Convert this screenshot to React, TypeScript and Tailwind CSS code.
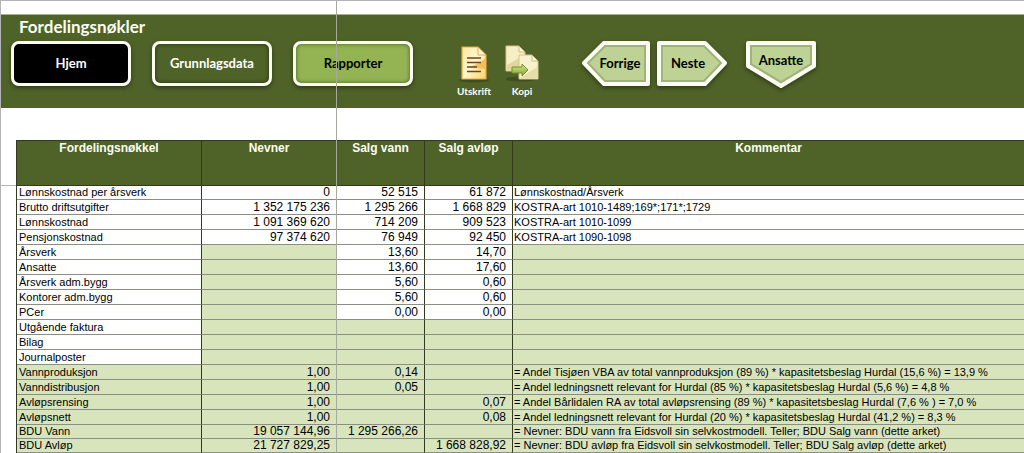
import React from 'react';
import clsx from 'clsx';

interface KeyRow {
  name: string;
  nevner?: string;
  vann?: string;
  avlop?: string;
  comment?: string;
  kind: 'cost' | 'staff' | 'empty' | 'share';
  compact?: boolean;
}

const rows: KeyRow[] = [
  { name: 'Lønnskostnad per årsverk', nevner: '0', vann: '52 515', avlop: '61 872', comment: 'Lønnskostnad/Årsverk', kind: 'cost', compact: true },
  { name: 'Brutto driftsutgifter', nevner: '1 352 175 236', vann: '1 295 266', avlop: '1 668 829', comment: 'KOSTRA-art 1010-1489;169*;171*;1729', kind: 'cost' },
  { name: 'Lønnskostnad', nevner: '1 091 369 620', vann: '714 209', avlop: '909 523', comment: 'KOSTRA-art 1010-1099', kind: 'cost' },
  { name: 'Pensjonskostnad', nevner: '97 374 620', vann: '76 949', avlop: '92 450', comment: 'KOSTRA-art 1090-1098', kind: 'cost' },
  { name: 'Årsverk', vann: '13,60', avlop: '14,70', kind: 'staff' },
  { name: 'Ansatte', vann: '13,60', avlop: '17,60', kind: 'staff' },
  { name: 'Årsverk adm.bygg', vann: '5,60', avlop: '0,60', kind: 'staff' },
  { name: 'Kontorer adm.bygg', vann: '5,60', avlop: '0,60', kind: 'staff' },
  { name: 'PCer', vann: '0,00', avlop: '0,00', kind: 'staff' },
  { name: 'Utgående faktura', kind: 'empty' },
  { name: 'Bilag', kind: 'empty' },
  { name: 'Journalposter', kind: 'empty' },
  { name: 'Vannproduksjon', nevner: '1,00', vann: '0,14', comment: '= Andel Tisjøen VBA av total vannproduksjon (89 %) * kapasitetsbeslag Hurdal (15,6 %) = 13,9 %', kind: 'share' },
  { name: 'Vanndistribusjon', nevner: '1,00', vann: '0,05', comment: '= Andel ledningsnett relevant for Hurdal (85 %) * kapasitetsbeslag Hurdal (5,6 %) = 4,8 %', kind: 'share' },
  { name: 'Avløpsrensing', nevner: '1,00', avlop: '0,07', comment: '= Andel Bårlidalen RA av total avløpsrensing (89 %) * kapasitetsbeslag Hurdal (7,6 % ) = 7,0 %', kind: 'share' },
  { name: 'Avløpsnett', nevner: '1,00', avlop: '0,08', comment: '= Andel ledningsnett relevant for Hurdal (20 %) * kapasitetsbeslag Hurdal (41,2 %) = 8,3 %', kind: 'share' },
  { name: 'BDU Vann', nevner: '19 057 144,96', vann: '1 295 266,26', comment: '= Nevner: BDU vann fra Eidsvoll sin selvkostmodell. Teller; BDU Salg vann (dette arket)', kind: 'share', compact: true },
  { name: 'BDU Avløp', nevner: '21 727 829,25', avlop: '1 668 828,92', comment: '= Nevner: BDU avløp fra Eidsvoll sin selvkostmodell. Teller; BDU Salg avløp (dette arket)', kind: 'share', compact: true },
];

const MenuButton: React.FC<{ label: string; className: string }> = ({ label, className }) => (
  <button
    className={clsx(
      'h-[45px] w-[120px] shrink-0 rounded-lg border-[3px] border-[#fbfdf3] text-[13px] font-bold shadow-[0_2px_4px_rgba(0,0,0,0.4)]',
      className
    )}
  >
    {label}
  </button>
);

interface ShapeButtonProps {
  label: string;
  width: string;
  points: string;
  shade: string;
  textClass: string;
}

const ShapeButton: React.FC<ShapeButtonProps> = ({ label, width, points, shade, textClass }) => (
  <button className={clsx('relative h-[47px] shrink-0 text-[13px] font-bold text-black', width)}>
    <svg
      viewBox="0 0 70 47"
      className="absolute inset-0 h-[47px] w-[70px] overflow-visible drop-shadow-[0_2px_2px_rgba(0,0,0,0.4)]"
    >
      <polygon points={points} fill="#bdd294" stroke="#fbfdf3" strokeWidth="4" strokeLinejoin="round" />
      <polygon points={shade} fill="none" stroke="#98aa73" strokeWidth="2" opacity="0.8" />
    </svg>
    <span className={clsx('relative block', textClass)}>{label}</span>
  </button>
);

const PrintIcon = () => (
  <svg width="34" height="38" viewBox="0 0 34 38">
    <defs>
      <linearGradient id="sheet" x1="0" y1="0" x2="1" y2="1">
        <stop offset="0" stopColor="#ffe9a0" />
        <stop offset="0.5" stopColor="#fff6cf" />
        <stop offset="1" stopColor="#fbd064" />
      </linearGradient>
    </defs>
    <ellipse cx="17" cy="35" rx="15" ry="2.5" fill="#2e3a18" opacity="0.5" />
    <path d="M5 2H21L29 10V34H5Z" fill="url(#sheet)" stroke="#e6a93c" strokeWidth="1.2" />
    <path d="M28 13C25 17 19 20 12 22L28 24Z" fill="#f5a62f" opacity="0.65" />
    <path d="M21 2V10H29Z" fill="#fff8dc" stroke="#e2aa4d" />
    <path d="M10 13H24M10 17.5H24M10 22H20M10 26.5H24" stroke="#70421d" strokeWidth="1.5" />
  </svg>
);

const CopyIcon = () => (
  <svg width="34" height="38" viewBox="0 0 34 38">
    <defs>
      <linearGradient id="arrow" x1="0" y1="0" x2="0" y2="1">
        <stop offset="0" stopColor="#dce88c" />
        <stop offset="1" stopColor="#81a52b" />
      </linearGradient>
    </defs>
    <ellipse cx="16" cy="34" rx="15" ry="2.5" fill="#2e3a18" opacity="0.5" />
    <path d="M1 1H14L20 7V26H1Z" fill="#f6efc5" stroke="#d5c88b" />
    <path d="M2 20L14 13V26H2Z" fill="#e2d6a0" />
    <path d="M14 1V7H20Z" fill="#fffbe3" stroke="#c9bb78" />
    <path d="M14 10H27L33 16V34H14Z" fill="#f8f1cc" stroke="#d5c88b" />
    <path d="M15 33L32 22V33Z" fill="#e8dda9" />
    <path d="M27 10V16H33Z" fill="#fffbe3" stroke="#c9bb78" />
    <path d="M7 22H17V19L23 25L17 31V28H7Z" fill="url(#arrow)" stroke="#72912c" />
  </svg>
);

const IconButton: React.FC<{ label: string; children: React.ReactNode }> = ({ label, children }) => (
  <button className="mt-1 flex w-12 shrink-0 flex-col items-center text-[10px] leading-4 font-bold text-white">
    {children}
    {label}
  </button>
);

const Banner = () => (
  <header className="h-[94px] border-t border-[#a9b48f] bg-[#4f6228] pl-2.5 font-[Lato,sans-serif]">
    <h1 className="mb-[3px] pl-2 text-[17px] leading-[23px] font-bold text-[#fbfdf3]">Fordelingsnøkler</h1>
    <nav className="flex items-start">
      <div className="flex gap-[21px]">
        <MenuButton label="Hjem" className="bg-black text-white" />
        <MenuButton
          label="Grunnlagsdata"
          className="bg-[#4f6228] text-white inset-shadow-[0_0_4px_rgba(20,30,5,0.7)]"
        />
        <MenuButton
          label="Rapporter"
          className="bg-[#94b454] text-black inset-shadow-[0_0_4px_rgba(50,75,15,0.8)]"
        />
      </div>
      <div className="ml-[37px] flex">
        <IconButton label="Utskrift">
          <PrintIcon />
        </IconButton>
        <IconButton label="Kopi">
          <CopyIcon />
        </IconButton>
      </div>
      <div className="ml-9 flex gap-[7px]">
        <ShapeButton
          label="Forrige"
          width="w-[68px]"
          points="2,22 22,2 66,2 66,43 22,43"
          shade="6,22 23,5 63,5 63,40 23,40"
          textClass="-mt-0.5 pl-2"
        />
        <ShapeButton
          label="Neste"
          width="w-[70px]"
          points="2,2 48,2 68,22 48,43 2,43"
          shade="5,5 47,5 64,22 47,40 5,40"
          textClass="-mt-0.5 pr-2"
        />
      </div>
      <div className="ml-[19px] flex">
        <ShapeButton
          label="Ansatte"
          width="w-[70px]"
          points="2,2 68,2 68,25 35,45 2,25"
          shade="5,5 65,5 65,23 35,41 5,23"
          textClass="-mt-2"
        />
      </div>
    </nav>
  </header>
);

const line = 'border-b border-b-[#8a8f82]';
const green = 'bg-[#d8e4bc]';

export default function App() {
  return (
    <div className="relative overflow-hidden border-t border-l border-[#b5b2b8] bg-white pt-[13px] font-['Liberation_Sans',Arial,sans-serif] text-black">
      <Banner />

      <main className="mt-8 flex">
        <div className="h-[46px] w-[15px] shrink-0 border-b border-[#b5b2b8]" />
        <table className="w-full table-fixed border-separate border-spacing-0 border-l border-[#33391f] text-xs leading-[14px]">
          <colgroup>
            <col className="w-[185px]" />
            <col className="w-[135px]" />
            <col className="w-[88px]" />
            <col className="w-[88px]" />
            <col />
          </colgroup>
          <thead>
            <tr className="h-[46px] bg-[#4f6228] align-top text-[#fbfdf3]">
              {['Fordelingsnøkkel', 'Nevner', 'Salg vann', 'Salg avløp', 'Kommentar'].map((title, i) => (
                <th
                  key={title}
                  className={clsx(
                    'border-t border-b border-[#33391f] p-0 font-bold',
                    i < 4 && 'border-r'
                  )}
                >
                  {title}
                </th>
              ))}
            </tr>
          </thead>
          <tbody>
            {rows.map((row) => {
              const share = row.kind === 'share';
              const staff = row.kind === 'staff';
              const shaded = row.kind !== 'cost';
              const values = clsx(line, 'border-r border-r-[#33391f] p-0 pr-1.5 text-right', shaded && !staff && green);

              return (
                <tr key={row.name} className={row.compact ? 'h-[14px] leading-[13px]' : 'h-[15px]'}>
                  <th
                    scope="row"
                    className={clsx(line, 'border-r border-r-[#33391f] p-0 pl-0.5 text-left text-[11px] leading-[inherit] font-normal', share && green)}
                  >
                    {row.name}
                  </th>
                  <td className={clsx(line, 'border-r border-r-[#33391f] p-0 pr-1.5 text-right', shaded && green)}>
                    {row.nevner}
                  </td>
                  <td className={values}>{row.vann}</td>
                  <td className={values}>{row.avlop}</td>
                  <td className={clsx(line, 'p-0 pl-px text-[11px] leading-[inherit] whitespace-nowrap', shaded && green)}>{row.comment}</td>
                </tr>
              );
            })}
          </tbody>
        </table>
      </main>

      {/* freeze pane divider */}
      <div className="pointer-events-none absolute inset-y-0 left-[335px] w-px bg-[#a5aa9c]" />
    </div>
  );
}
